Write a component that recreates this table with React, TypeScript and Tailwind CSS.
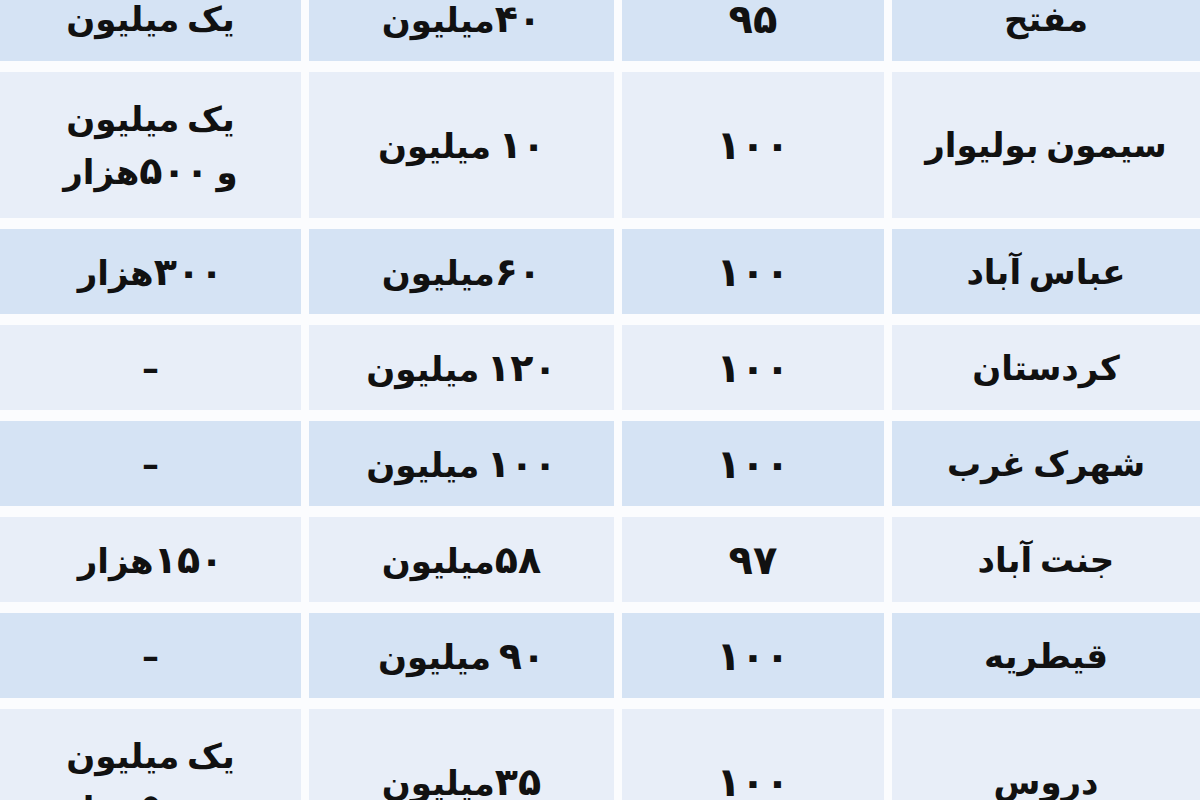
const rows = [
  { area: "مفتح", pct: "۹۵", price: "۴۰میلیون", rent: ["یک میلیون"], tall: false },
  { area: "سیمون بولیوار", pct: "۱۰۰", price: "۱۰ میلیون", rent: ["یک میلیون", "و ۵۰۰هزار"], tall: true },
  { area: "عباس آباد", pct: "۱۰۰", price: "۶۰میلیون", rent: ["۳۰۰هزار"], tall: false },
  { area: "کردستان", pct: "۱۰۰", price: "۱۲۰ میلیون", rent: ["–"], tall: false },
  { area: "شهرک غرب", pct: "۱۰۰", price: "۱۰۰ میلیون", rent: ["–"], tall: false },
  { area: "جنت آباد", pct: "۹۷", price: "۵۸میلیون", rent: ["۱۵۰هزار"], tall: false },
  { area: "قیطریه", pct: "۱۰۰", price: "۹۰ میلیون", rent: ["–"], tall: false },
  { area: "دروس", pct: "۱۰۰", price: "۳۵میلیون", rent: ["یک میلیون", "و ۵۰۰هزار"], tall: true },
];

// digits in the picture are set a size up from the words
const Txt = ({ s }: { s: string }) => (
  <>
    {s.split(/([۰-۹]+)/).map((part, i) =>
      /[۰-۹]/.test(part) ? (
        <span key={i} className="text-[38px] tracking-[0.08em]">
          {part}
        </span>
      ) : (
        <span key={i}>{part}</span>
      )
    )}
  </>
);

const Cell = ({ children, blue, tall }: { children: React.ReactNode; blue: boolean; tall: boolean }) => (
  <div
    className={`flex flex-col items-center justify-center text-center ${tall ? "h-[146px]" : "h-[85px]"} ${
      blue ? "bg-[#d5e3f4]" : "bg-[#e8eef8]"
    }`}
  >
    {children}
  </div>
);

export default function App() {
  return (
    <div className="w-[1200px] h-[800px] overflow-hidden bg-[#fbfcfe]">
      <div
        dir="rtl"
        className="-mt-[24px] grid grid-cols-[308px_262px_305px_1fr] gap-x-[8px] gap-y-[11px] text-[#111] font-bold text-[34px] [word-spacing:-0.12em] [font-family:'DejaVu_Sans',sans-serif]"
      >
        {rows.map((r, i) => {
          const blue = i % 2 === 0;
          return [
            <Cell key={`a${i}`} blue={blue} tall={r.tall}>
              <span className="leading-none">{r.area}</span>
            </Cell>,
            <Cell key={`p${i}`} blue={blue} tall={r.tall}>
              <span className="leading-none text-[40px] tracking-[0.2em]">{r.pct}</span>
            </Cell>,
            <Cell key={`m${i}`} blue={blue} tall={r.tall}>
              <span className="leading-none">
                <Txt s={r.price} />
              </span>
            </Cell>,
            <Cell key={`r${i}`} blue={blue} tall={r.tall}>
              {r.rent.map((t) => (
                <span key={t} className={r.rent.length > 1 ? "leading-[52px]" : "leading-none"}>
                  <Txt s={t} />
                </span>
              ))}
            </Cell>,
          ];
        })}
      </div>
    </div>
  );
}
